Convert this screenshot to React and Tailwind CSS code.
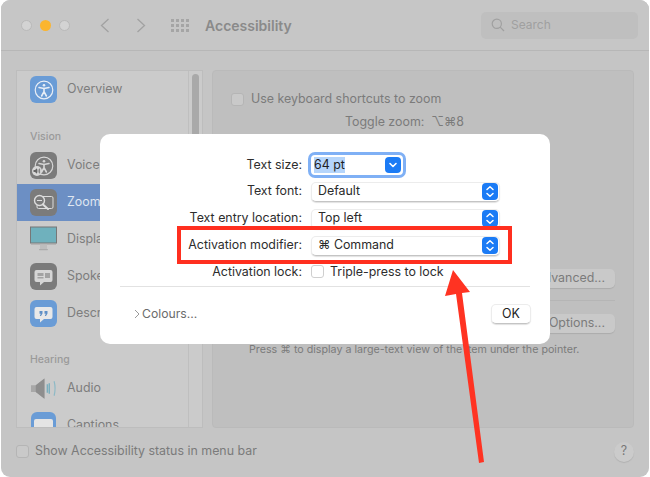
const font = { fontFamily: '"Inter","Liberation Sans",sans-serif' };

function Figure({ stroke = "#e8eef6", size = 20 }) {
  return (
    <svg width={size} height={size} viewBox="0 0 20 20" fill="none" stroke={stroke} strokeLinecap="round">
      <circle cx="10" cy="10" r="8.8" strokeWidth="1.2" />
      <circle cx="10" cy="5.2" r="1.3" fill={stroke} stroke="none" />
      <path d="M5 7.6 L10 8.6 L15 7.6" strokeWidth="1.5" />
      <path d="M10 8.6 V11.6 M10 11.6 L7.6 16 M10 11.6 L12.4 16" strokeWidth="1.6" />
    </svg>
  );
}

function Overview() {
  return (
    <div className="w-[27px] h-[27px] rounded-[6px] bg-[#6a9cd6] flex items-center justify-center">
      <Figure />
    </div>
  );
}

function VoiceIcon() {
  return (
    <div className="relative w-[27px] h-[27px] rounded-[6px] bg-[#7b7b7b] flex items-center justify-center">
      <Figure stroke="#d6d6d6" />
      <div className="absolute left-[2px] bottom-[3px] w-[10px] h-[10px] rounded-full bg-[#d8d8d8] flex items-center justify-center">
        <svg width="8" height="8" viewBox="0 0 8 8" fill="#666"><path d="M0.5 3H2L4 1.2V6.8L2 5H0.5Z" /><path d="M5 2.4V5.6M6.6 1.6V6.4" stroke="#666" strokeWidth="0.8" /></svg>
      </div>
    </div>
  );
}

function ZoomIcon() {
  return (
    <div className="w-[27px] h-[27px] rounded-[6px] bg-[#7b7b7b] flex items-center justify-center">
      <svg width="23" height="20" viewBox="0 0 23 20" fill="none" stroke="#dcdcdc">
        <rect x="5" y="3.5" width="16" height="12" rx="1.5" strokeWidth="1" />
        <circle cx="7.5" cy="7.5" r="5" fill="#7b7b7b" strokeWidth="1.4" />
        <path d="M5 7.5H10" strokeWidth="1.2" />
        <path d="M11 11.5L16 16" strokeWidth="2" strokeLinecap="round" />
      </svg>
    </div>
  );
}

function DisplayIcon() {
  return (
    <svg width="27" height="27" viewBox="0 0 27 27">
      <rect x="0.5" y="1" width="26" height="16" fill="#6fb1bd" stroke="#777" strokeWidth="1" />
      <rect x="1" y="17" width="25" height="1.5" fill="#a0a0a0" />
      <rect x="10" y="18.5" width="7" height="5" fill="#bdbdbd" />
      <rect x="9" y="23" width="9" height="1.2" rx="0.6" fill="#ababab" />
    </svg>
  );
}

function SpokenIcon() {
  return (
    <div className="w-[27px] h-[27px] rounded-[6px] bg-[#7b7b7b] flex items-center justify-center">
      <svg width="21" height="20" viewBox="0 0 21 20">
        <path d="M3.5 3H17.5A2 2 0 0 1 19.5 5V13A2 2 0 0 1 17.5 15H11L7 18.5V15H3.5A2 2 0 0 1 1.500 13V5A2 2 0 0 1 3.500 3Z" fill="#d6d6d6" />
        <rect x="4.500" y="6" width="6" height="3" fill="#a2a2a2" />
        <rect x="12" y="6" width="5" height="5" fill="#a2a2a2" />
        <rect x="4.500" y="10" width="6" height="1.500" fill="#a2a2a2" />
      </svg>
    </div>
  );
}

function DescIcon() {
  return (
    <div className="w-[27px] h-[27px] rounded-[6px] bg-[#6a9cd6] flex items-center justify-center">
      <svg width="21" height="20" viewBox="0 0 21 20">
        <path d="M3.500 3H17.500A2 2 0 0 1 19.500 5V13A2 2 0 0 1 17.500 15H11L7 18.500V15H3.500A2 2 0 0 1 1.500 13V5A2 2 0 0 1 3.500 3Z" fill="#e8e8e8" />
        <path d="M6.500 7h3v2.500L8 12H6.800L7.800 9.800H6.500Z M11.500 7h3v2.500L13 12H11.800L12.800 9.800H11.500Z" fill="#5f8fc6" />
      </svg>
    </div>
  );
}

function AudioIcon() {
  return (
    <svg width="28" height="27" viewBox="0 0 28 27">
      <path d="M1 10H6L15 3V24L6 17H1Z" fill="#a8a8a8" />
      <path d="M6 10L15 3V24L6 17Z" fill="#8e8e8e" />
      <path d="M18 9V18M20 8V19" stroke="#7aaebd" strokeWidth="1.500" fill="none" />
      <path d="M25 6Q27 13.500 25 21" stroke="#8cb9c6" strokeWidth="1.200" fill="none" />
    </svg>
  );
}

function CaptionsIcon() {
  return (
    <div className="w-[25px] h-[27px] rounded-[6px] bg-[#6a9cd6] flex items-center justify-center">
      <div className="w-[19px] h-[15px] rounded-[2px] bg-[#e4e4e4] mt-[2px] flex items-end justify-center gap-[1px] pb-[2px]">
        <div className="w-[6px] h-[2px] bg-[#6a9cd6]" />
        <div className="w-[6px] h-[2px] bg-[#6a9cd6]" />
      </div>
    </div>
  );
}

function SideItem({ icon, label, selected }) {
  return (
    <div className={`flex items-center h-[37px] pl-[13px] gap-[10px] text-[12.4px] ${selected ? "bg-[#6c8fc4] text-[#dfe6f1]" : "text-[#7d7d7d]"}`}>
      <div className="w-[27px] flex justify-center">{icon}</div>
      <span>{label}</span>
    </div>
  );
}

function SideLabel({ children, className }) {
  return <div className={`pl-[13px] text-[10.5px] font-medium text-[#9a9a9a] leading-[14px] ${className}`}>{children}</div>;
}

function Stepper() {
  return (
    <div className="w-[16px] h-[17px] rounded-[4px] bg-[#1b7bf5] flex items-center justify-center">
      <svg width="10" height="13" viewBox="0 0 10 13" fill="none" stroke="#fff" strokeWidth="1.500" strokeLinecap="round" strokeLinejoin="round">
        <path d="M2 4.500L5 1.800L8 4.500" />
        <path d="M2 8.500L5 11.200L8 8.500" />
      </svg>
    </div>
  );
}

function Popup({ children }) {
  return (
    <div className="w-[189px] h-[20px] rounded-[5px] bg-white border border-[#ececec] border-b-[#c4c4c4] shadow-[0_1px_1px_rgba(0,0,0,0.12)] flex items-center justify-between pl-[6px] pr-[1px] text-[#2a2a2a]">
      <span>{children}</span>
      <Stepper />
    </div>
  );
}

function Row({ label, children, h = "h-[27px]" }) {
  return (
    <div className={`flex items-center ${h}`}>
      <div className="w-[202px] text-right text-[#2d2d2d]">{label}</div>
      <div className="ml-[9px]">{children}</div>
    </div>
  );
}

function Dialog() {
  return (
    <div className="absolute left-[100px] top-[134px] w-[450px] h-[210px] bg-white rounded-[10px] text-[12.4px] flex flex-col pt-[18px]">
      <Row label="Text size:" h="h-[26px]">
        <div className="w-[92px] h-[20px] rounded-[4px] bg-white outline-[3px] outline-[#7fb0f5] flex items-center justify-between pl-[3px] pr-[2px] text-[#1f1f1f]">
          <span className="bg-[#b5d5fb] leading-[16px]">64 pt</span>
          <div className="w-[16px] h-[16px] rounded-[4px] bg-[#1b7bf5] flex items-center justify-center">
            <svg width="10" height="8" viewBox="0 0 10 8" fill="none" stroke="#fff" strokeWidth="1.600" strokeLinecap="round" strokeLinejoin="round"><path d="M2 2.500L5 5.500L8 2.500" /></svg>
          </div>
        </div>
      </Row>
      <Row label="Text font:"><Popup>Default</Popup></Row>
      <Row label="Text entry location:"><Popup>Top left</Popup></Row>
      <Row label="Activation modifier:"><Popup>⌘ Command</Popup></Row>
      <Row label="Activation lock:" h="h-[26px]">
        <div className="flex items-center gap-[6px] text-[#2d2d2d]">
          <div className="w-[13px] h-[13px] rounded-[3px] bg-white border border-[#cfcfcf]" />
          <span>Triple-press to lock</span>
        </div>
      </Row>
      <div className="mx-[20px] mt-[1px] h-px bg-[#e2e2e2]" />
      <div className="flex items-center justify-between ml-[34px] mr-[19px] mt-[17px] h-[20px]">
        <div className="flex items-center gap-[2px] text-[12.2px] text-[#6b6b6b]">
          <svg width="6" height="10" viewBox="0 0 6 10" fill="none" stroke="#9a9a9a" strokeWidth="1"><path d="M1 1L5 5L1 9" /></svg>
          <span>Colours...</span>
        </div>
        <div className="w-[40px] h-[20px] rounded-[5px] bg-white border border-[#ececec] border-b-[#c4c4c4] shadow-[0_1px_1px_rgba(0,0,0,0.12)] flex items-center justify-center text-[#222]">OK</div>
      </div>
    </div>
  );
}

function GhostButton({ children }) {
  return <div className="w-[90px] h-[19px] rounded-[5px] bg-[#c9c9c9] shadow-[0_1px_1px_rgba(0,0,0,0.1)] flex items-center justify-end pr-[10px] text-[#7b7b7b]">{children}</div>;
}

export default function App() {
  return (
    <div style={font} className="relative w-[650px] h-[477px] overflow-hidden bg-white">
      <div className="ml-px w-[648px] h-[477px] rounded-[9px] overflow-hidden bg-[#c5c5c5] flex flex-col">
        <div className="h-[51px] border-b border-[#b7b7b7] bg-[#c6c6c6] flex items-center pl-[20px] pr-[11px] shrink-0">
          <div className="flex gap-[8px]">
            <div className="w-[11px] h-[11px] rounded-full bg-[#d3d3d3] border border-[#b9b9b9]" />
            <div className="w-[11px] h-[11px] rounded-full bg-[#fbb52f]" />
            <div className="w-[11px] h-[11px] rounded-full bg-[#d3d3d3] border border-[#b9b9b9]" />
          </div>
          <svg className="ml-[30px]" width="10" height="15" viewBox="0 0 10 15" fill="none" stroke="#a2a2a2" strokeWidth="1.300"><path d="M8.500 1L1.500 7.500L8.500 14" /></svg>
          <svg className="ml-[26px]" width="10" height="15" viewBox="0 0 10 15" fill="none" stroke="#a2a2a2" strokeWidth="1.300"><path d="M1.500 1L8.500 7.500L1.500 14" /></svg>
          <div className="ml-[25px] grid grid-cols-4 gap-[2px]">
            {Array.from({ length: 12 }).map((_, i) => <div key={i} className="w-[3px] h-[3px] bg-[#a5a5a5]" />)}
          </div>
          <div className="ml-[16px] mt-[1px] text-[14px] font-semibold text-[#8a8a8a]">Accessibility</div>
          <div className="ml-auto w-[157px] h-[27px] rounded-[5px] bg-[#bfbfbf] flex items-center pl-[10px] gap-[6px] text-[12px] text-[#a0a0a0]">
            <svg width="14" height="14" viewBox="0 0 14 14" fill="none" stroke="#a0a0a0" strokeWidth="1.200"><circle cx="5.800" cy="5.800" r="4.600" /><path d="M9.200 9.200L13 13" /></svg>
            <span>Search</span>
          </div>
        </div>

        <div className="flex pt-[19px] pl-[15px] pr-[15px] gap-[9px] h-[377px] shrink-0">
          <div className="w-[187px] h-[358px] bg-[#cbcbcb] border border-[#bdbdbd] flex overflow-hidden">
            <div className="flex-1 min-w-0">
              <SideItem icon={<Overview />} label="Overview" />
              <SideLabel className="mt-[22px] mb-[3px]">Vision</SideLabel>
              <SideItem icon={<VoiceIcon />} label="VoiceOver" />
              <SideItem icon={<ZoomIcon />} label="Zoom" selected />
              <SideItem icon={<DisplayIcon />} label="Display" />
              <SideItem icon={<SpokenIcon />} label="Spoken Content" />
              <SideItem icon={<DescIcon />} label="Descriptions" />
              <SideLabel className="mt-[21px] mb-[3px]">Hearing</SideLabel>
              <SideItem icon={<AudioIcon />} label="Audio" />
              <SideItem icon={<CaptionsIcon />} label="Captions" />
            </div>
            <div className="w-[14px] border-l border-[#bfbfbf] pl-[3px] pt-[3px] shrink-0">
              <div className="w-[7px] h-[120px] rounded-full bg-[#a9a9a9]" />
            </div>
          </div>

          <div className="w-[422px] h-[358px] bg-[#bfbfbf] border border-[#bababa] rounded-[4px] text-[12.4px] text-[#7b7b7b] flex flex-col pr-[18px]">
            <div className="flex items-center gap-[7px] mt-[21px] ml-[18px] h-[14px]">
              <div className="w-[13px] h-[13px] rounded-[3px] bg-[#c9c9c9] border border-[#b5b5b5]" />
              <span>Use keyboard shortcuts to zoom</span>
            </div>
            <div className="mt-[8px] ml-[132px] leading-[16px]">Toggle zoom:&nbsp; ⌥⌘8</div>
            <div className="mt-[139px] flex justify-end"><GhostButton>Advanced...</GhostButton></div>
            <div className="mt-[12px] ml-[280px] h-px bg-[#b5b5b5]" />
            <div className="mt-[13px] flex justify-end"><GhostButton>Options...</GhostButton></div>
            <div className="mt-[10px] ml-[36px] text-[10.7px] leading-[14px] whitespace-nowrap">Press ⌘ to display a large-text view of the item under the pointer.</div>
          </div>
        </div>

        <div className="flex items-center justify-between pl-[15px] pr-[15px] h-[49px] -mt-[1px] text-[12.4px] text-[#7b7b7b]">
          <div className="flex items-center gap-[6px]">
            <div className="w-[13px] h-[13px] rounded-[3px] bg-[#c9c9c9] border border-[#b5b5b5]" />
            <span>Show Accessibility status in menu bar</span>
          </div>
          <div className="w-[20px] h-[20px] rounded-full bg-[#cbcbcb] shadow-[0_1px_1px_rgba(0,0,0,0.1)] flex items-center justify-center text-[#777]">?</div>
        </div>
      </div>

      <Dialog />

      <div className="absolute left-[177px] top-[226px] w-[335px] h-[38px] border-[4px] border-[#ff2f1f]" />
      <svg className="absolute left-[440px] top-[265px]" width="50" height="202" viewBox="0 0 50 202">
        <polygon points="13,5 30,27 22,28 44,197 39,198 16,29 5,31" fill="#ff3322" />
      </svg>
    </div>
  );
}
